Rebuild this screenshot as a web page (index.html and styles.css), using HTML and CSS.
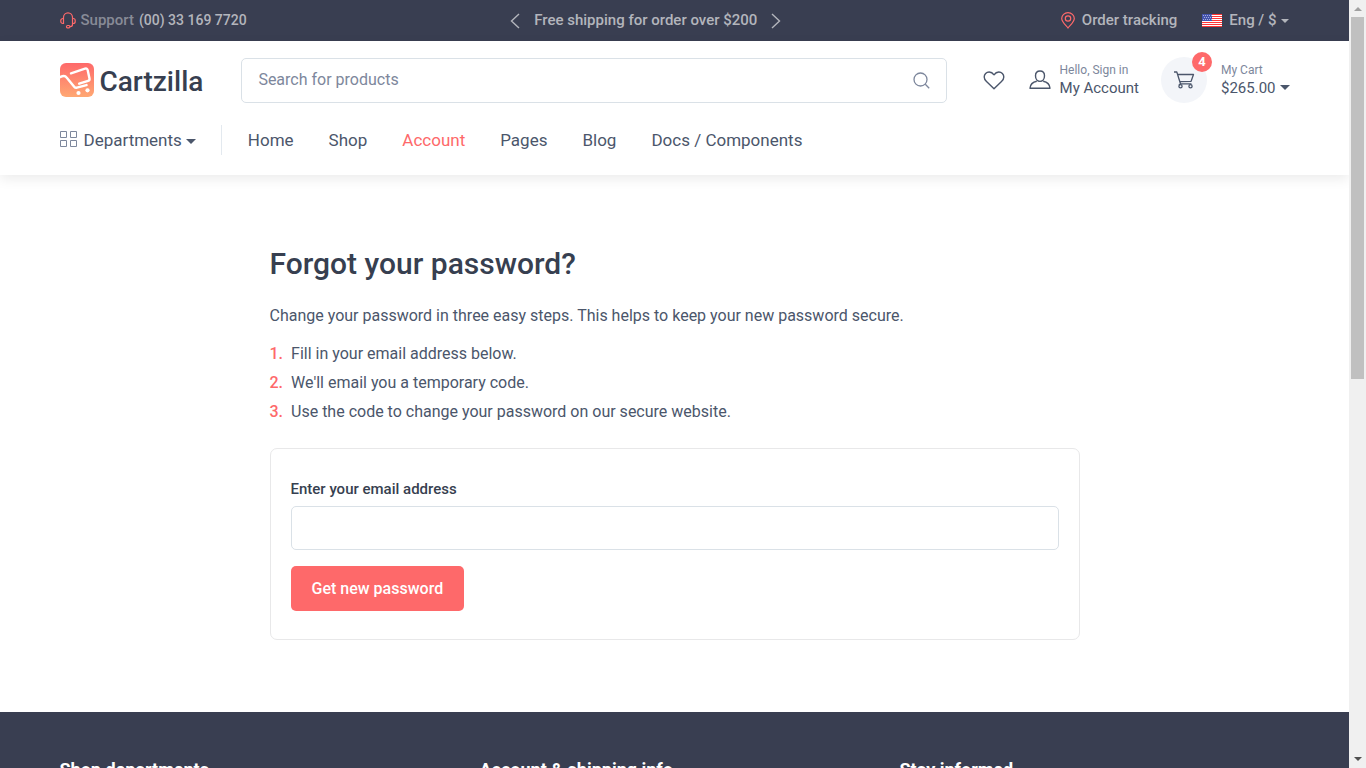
FILE: index.html
```html
<!DOCTYPE html>
<html lang="en">
<head>
<meta charset="utf-8">
<meta name="viewport" content="width=device-width, initial-scale=1">
<title>Cartzilla | Password recovery</title>
<link rel="stylesheet" href="styles.css">
</head>
<body>
<div class="window">
<div class="page">
  <div class="topbar">
    <div class="container topbar-row">
      <div class="support">
        <svg class="icon-accent" width="16" height="17" viewBox="0 0 16 17" fill="none" stroke="currentColor" stroke-width="1.200" aria-hidden="true"><path d="M3.500 6.500V5.500a4.500 4.700 0 0 1 9 0v1M3.500 6.500v5H2.800A2 2 0 0 1 .8 9.500v-1a2 2 0 0 1 2-2zM12.500 6.500h.7a2 2 0 0 1 2 2v1a2 2 0 0 1-2 2h-.7zM12.500 11.500v1a2 2 0 0 1-2 2H9.500"/><rect x="6.500" y="13.500" width="3.500" height="2.300" rx="1.100"/></svg>
        <span class="muted">Support</span><a href="#">(00) 33 169 7720</a>
      </div>
      <div class="promo">
        <button type="button" aria-label="Previous"><svg width="10" height="16" viewBox="0 0 10 16" fill="none" stroke="currentColor" stroke-width="1.400"><path d="M9 1 1.500 8 9 15"/></svg></button>
        <span>Free shipping for order over $200</span>
        <button type="button" aria-label="Next"><svg width="10" height="16" viewBox="0 0 10 16" fill="none" stroke="currentColor" stroke-width="1.400"><path d="m1 1 7.500 7L1 15"/></svg></button>
      </div>
      <div class="topbar-end">
        <a href="#" class="tracking"><svg class="icon-accent" width="14" height="17" viewBox="0 0 14 17" fill="none" stroke="currentColor" stroke-width="1.200" aria-hidden="true"><path d="M7 16C5.200 13.500.7 10 .7 6.500a6.300 5.900 0 0 1 12.600 0C13.300 10 8.800 13.500 7 16z"/><circle cx="7" cy="6.500" r="2.700"/></svg>Order tracking</a>
        <button type="button" class="language">
          <svg width="20" height="13" viewBox="0 0 20 13" aria-hidden="true"><path fill="#fff" d="M0 0h20v13H0z"/><path stroke="#ff3535" d="M0 .5h20M0 2.500h20M0 4.500h20M0 6.500h20M0 8.500h20M0 10.500h20M0 12.500h20"/><path fill="#4453ad" d="M0 0h10v7H0z"/><path stroke="#a5aedd" stroke-dasharray="1 1" d="M1 1.500h9M2 3.500h8M1 5.500h9"/></svg>
          Eng / $<span class="caret caret-small"></span>
        </button>
      </div>
    </div>
  </div>

  <header class="header">
    <div class="container header-row">
      <a href="#" class="brand">
        <svg width="34" height="34" viewBox="0 0 34 34" aria-hidden="true"><defs><linearGradient id="brand-fill" x1="0" y1="0" x2="0" y2="1"><stop stop-color="#fe696a"/><stop offset="1" stop-color="#ffa873"/></linearGradient></defs><rect width="34" height="34" rx="6" fill="url(#brand-fill)"/><g fill="none" stroke="#fff" stroke-width="2.400" stroke-linecap="round" stroke-linejoin="round"><path d="M0 14.200c3-1.500 5.200-1.600 6.600.2l7.600 9.300c.8 1 1.700 1.300 2.700 1l9.600-2.600"/><path d="M11 10.300 25 5.700c1.500-.5 2.400 0 2.700 1.500l1.800 8.200c.3 1.400-.2 2-1.400 2.400l-8.900 2.900"/></g><circle cx="18.500" cy="30" r="2.100" fill="#fff"/><circle cx="27.500" cy="27.300" r="2.100" fill="#fff"/></svg>
        <span>Cartzilla</span>
      </a>
      <form class="search">
        <input type="search" placeholder="Search for products" aria-label="Search for products">
        <button type="submit" aria-label="Search"><svg width="17" height="17" viewBox="0 0 17 17" fill="none" stroke="currentColor" stroke-width="1.300"><circle cx="7.500" cy="7.500" r="6.500"/><path d="m12.300 12.300 3.900 3.900"/></svg></button>
      </form>
      <div class="tools">
        <a href="#" class="wishlist" aria-label="Wishlist"><svg width="22" height="19" viewBox="0 0 22 19" fill="none" stroke="currentColor" stroke-width="1.400" stroke-linejoin="round"><path d="M11 3.800C9.600 1.800 8 1 6.200 1 3.300 1 1.200 3.200 1.200 6c0 2 .9 3.200 2.300 4.600L11 17.800l7.500-7.200C19.900 9.200 20.800 8 20.800 6c0-2.800-2.100-5-5-5-1.800 0-3.400.8-4.800 2.800z"/></svg></a>
        <a href="#" class="account">
          <svg width="22" height="20" viewBox="0 0 22 20" fill="none" stroke="currentColor" stroke-width="1.400" stroke-linejoin="round" aria-hidden="true"><path d="M11 1c2.800 0 4.500 2 4.500 4.800 0 3.200-1.900 5.600-4.500 5.600S6.500 9 6.500 5.800C6.500 3 8.200 1 11 1zM7.800 11.300C4 12 1.300 14.400 1 18.300h20c-.3-3.900-3-6.300-6.800-7"/></svg>
          <span class="tool-text"><small>Hello, Sign in</small><span>My Account</span></span>
        </a>
        <a href="#" class="cart">
          <span class="cart-icon"><svg width="22" height="18" viewBox="0 0 22 18" fill="none" stroke="currentColor" stroke-width="1.300" stroke-linejoin="round" aria-hidden="true"><path d="M1 1h2.800L7.500 12.800h11M4.700 3.500h15.800l-2.400 6.800-11.300.3M7.500 12.800 6 14"/><circle cx="7.500" cy="15.300" r="1.600"/><circle cx="17.500" cy="15.300" r="1.600"/></svg><span class="badge">4</span></span>
          <span class="tool-text"><small>My Cart</small><span>$265.00<span class="caret"></span></span></span>
        </a>
      </div>
    </div>
    <nav class="container nav" aria-label="Main">
      <button type="button" class="departments"><svg width="17" height="16" viewBox="0 0 17 16" fill="none" stroke="currentColor" aria-hidden="true"><path d="M.5.5h6v6h-6zM10.500.5h6v6h-6zM.5 9.500h6v6h-6zM10.500 9.500h6v6h-6z"/></svg>Departments<span class="caret"></span></button>
      <a href="#">Home</a><a href="#">Shop</a><a href="#" class="active" aria-current="page">Account</a><a href="#">Pages</a><a href="#">Blog</a><a href="#">Docs / Components</a>
    </nav>
  </header>

  <main class="main">
    <h1>Forgot your password?</h1>
    <p>Change your password in three easy steps. This helps to keep your new password secure.</p>
    <ol class="steps">
      <li><b>1.</b>Fill in your email address below.</li>
      <li><b>2.</b>We'll email you a temporary code.</li>
      <li><b>3.</b>Use the code to change your password on our secure website.</li>
    </ol>
    <form class="card">
      <label for="email">Enter your email address</label>
      <input id="email" type="email">
      <button type="submit">Get new password</button>
    </form>
  </main>

  <footer class="footer">
    <div class="container footer-row">
      <h2>Shop departments</h2>
      <h2>Account &amp; shipping info</h2>
      <h2>Stay informed</h2>
    </div>
  </footer>
</div>
<div class="scrollbar" aria-hidden="true"><span class="arrow-up"></span><span class="thumb"></span><span class="arrow-down"></span></div>
</div>
</body>
</html>
```
FILE: styles.css
```css
*, *::before, *::after { box-sizing: border-box; }
body { margin: 0; color: #4b566b; background: #fff; font: 16px/24px Roboto, sans-serif; }
a { color: inherit; text-decoration: none; }
button { border: 0; padding: 0; background: none; color: inherit; font: inherit; cursor: pointer; }
svg { display: block; flex: none; }
h1, h2, p, ol { margin: 0; }

.window { display: flex; height: 100vh; }
.page { flex: 1; min-width: 0; overflow-y: auto; scrollbar-width: none; }
.container { width: 100%; max-width: 1260px; margin: 0 auto; padding: 0 15px; }
.caret { display: inline-block; border: 5px solid transparent; border-top-color: currentColor; border-bottom: 0; }
.caret-small { border-width: 4px 4px 0; }
.icon-accent { color: #fe696a; }

.topbar { background: #393e51; color: #b3b5bc; font-size: 15px; font-weight: 500; line-height: 21px; }
.topbar-row { display: flex; justify-content: space-between; align-items: center; padding-top: 10px; padding-bottom: 10px; }
.support { display: flex; align-items: center; gap: 5px; }
.support a { font-size: 14px; }
.support .muted { color: #888b97; }
.promo { display: flex; align-items: center; gap: 14px; margin-right: 16px; }
.topbar-end { display: flex; justify-content: flex-end; gap: 25px; }
.tracking, .language { display: flex; align-items: center; gap: 7px; }
.language .caret { margin-left: -2px; }

.header { position: relative; padding-bottom: 14px; background: #fff; box-shadow: 0 4px 12px rgba(0, 0, 0, .08); }
.header-row { display: flex; align-items: center; height: 78px; }
.brand { display: flex; align-items: center; gap: 6px; margin-right: 38px; color: #373f50; font-size: 28px; font-weight: 500; }
.brand span { padding-top: 3px; }
.search { display: flex; flex: 1; align-items: center; border: 1px solid #dae1e7; border-radius: 5px; height: 45px; padding: 0 16px; color: #7d879c; }
.search input { flex: 1; min-width: 0; border: 0; padding: 0; outline: 0; background: none; color: #4b566b; font: inherit; }
.search input::placeholder { color: #7d879c; opacity: 1; }
.tools { display: flex; align-items: center; margin-left: 36px; }
.account { display: flex; align-items: center; gap: 9px; margin-left: 24px; }
.tool-text { display: flex; flex-direction: column; padding-bottom: 3px; font-size: 15px; line-height: 18px; }
.tool-text small { color: #7d879c; font-size: 12px; }
.tool-text .caret { margin-left: 4px; vertical-align: 3px; }
.cart { display: flex; align-items: center; gap: 14px; margin-left: 22px; }
.cart-icon { position: relative; display: grid; place-items: center; width: 46px; height: 46px; border-radius: 50%; background: #f3f5f9; }
.badge { position: absolute; top: -5px; right: -5px; width: 20px; height: 20px; border-radius: 50%; background: #fe696a; color: #fff; font-size: 13px; font-weight: 700; line-height: 20px; text-align: center; }

.nav { display: flex; align-items: center; gap: 35px; height: 42px; font-size: 17px; }
.departments { display: flex; align-items: center; gap: 7px; height: 30px; margin-right: -9px; border-right: 1px solid #e3e9ef; padding-right: 25px; }
.departments svg { margin-bottom: 2px; color: #7d879c; }
.departments .caret { margin: 3px 0 0 -3px; }
.nav .active { color: #fe696a; }

.main { max-width: 840px; margin: 0 auto; padding: 71px 15px 72px; font-size: 16px; }
.main h1 { margin-bottom: 22px; color: #373f50; font-size: 30px; font-weight: 500; line-height: 36px; }
.main p { margin-bottom: 14px; }
.steps { list-style: none; padding: 0; }
.steps li { margin-bottom: 5px; }
.steps b { margin-right: 8px; color: #fe696a; font-weight: 500; }
.card { display: flex; flex-direction: column; align-items: flex-start; margin-top: 24px; border: 1px solid #e8e8e9; border-radius: 7px; padding: 30px 20px 28px; }
.card label { margin-bottom: 6px; color: #373f50; font-size: 15px; font-weight: 500; line-height: 21px; }
.card input { width: 100%; height: 44px; border: 1px solid #dae1e7; border-radius: 5px; padding: 0 16px; font: inherit; }
.card button { height: 45px; margin-top: 16px; border-radius: 5px; padding: 0 21px; background: #fe696a; color: #fff; font-weight: 500; }

.footer { min-height: 320px; padding-top: 46px; background: #393e51; color: #fff; }
.footer-row { display: grid; grid-template-columns: repeat(3, 1fr); gap: 30px; }
.footer h2 { font-size: 18px; font-weight: 700; line-height: 24px; }

.scrollbar { display: flex; flex-direction: column; align-items: center; width: 17px; padding: 7px 0; background: #f0f0f0; }
.arrow-up { border: 4px solid transparent; border-top: 0; border-bottom-color: #a0a0a0; }
.thumb { width: 13px; height: 48%; margin: 6px 0 auto; background: #c0c0c0; }
.arrow-down { border: 4px solid transparent; border-bottom: 0; border-top-color: #505050; }
```
